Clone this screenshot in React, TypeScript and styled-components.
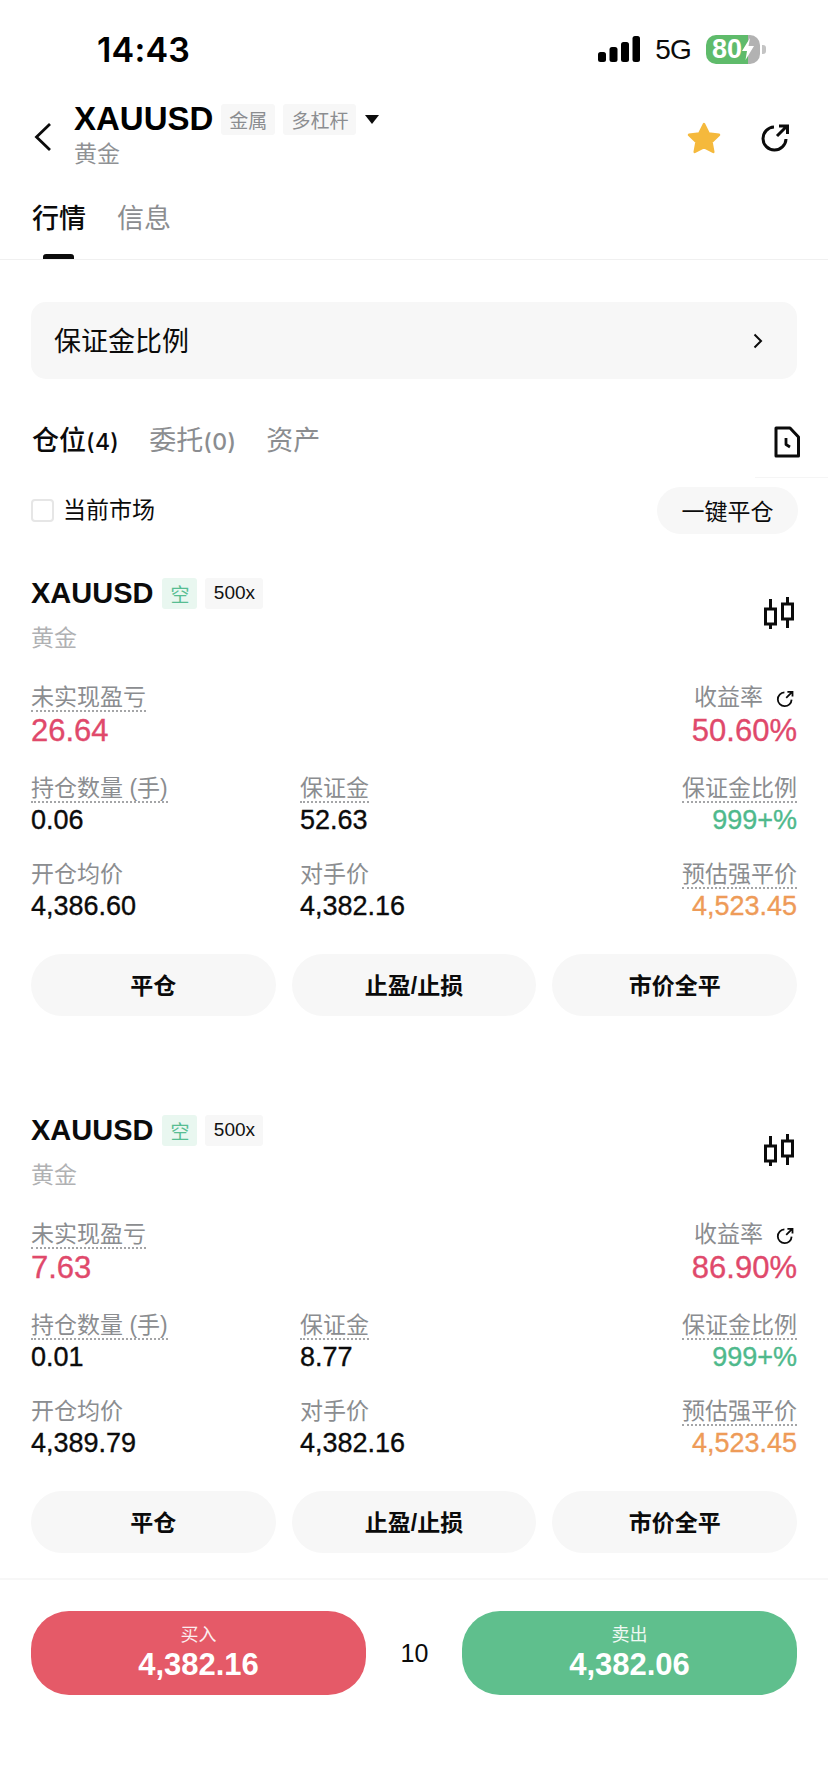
import React from "react";
import styled, { createGlobalStyle } from "styled-components";

const GlobalStyle = createGlobalStyle`
  html, body { margin: 0; padding: 0; background: #fff; }
  body { font-family: "Liberation Sans", "Noto Sans CJK SC", sans-serif; color: #0b0b0b; }
  * { box-sizing: border-box; }
`;

const Page = styled.div`
  width: 828px;
  height: 1792px;
  overflow: hidden;
  display: flex;
  flex-direction: column;
  background: #fff;
`;

/* Status bar */
const StatusBar = styled.div`
  height: 99px;
  padding: 29px 68px 0 97px;
  display: flex;
  justify-content: space-between;
  align-items: flex-start;
`;
const Clock = styled.div`
  font-family: "Inter", "Liberation Sans", sans-serif;
  font-size: 34px;
  font-weight: 600;
  line-height: 41px;
  letter-spacing: 0.2px;
  color: #000;
`;
const StatusRight = styled.div`
  display: flex;
  align-items: center;
  height: 40px;
`;
const Network = styled.span`
  font-size: 28px;
  line-height: 40px;
  letter-spacing: -0.8px;
  margin: 2px 15px 0 15px;
`;
const Battery = styled.div`
  width: 54px;
  height: 29px;
  border-radius: 10px;
  background: linear-gradient(90deg, #5fbb6b 0 78%, #b2b2b2 78% 100%);
  color: #fff;
  font-size: 27px;
  font-weight: 700;
  line-height: 29px;
  padding-left: 6px;
  display: flex;
  align-items: center;
  position: relative;
  &::after {
    content: "";
    position: absolute;
    right: -6px;
    top: 10px;
    width: 4px;
    height: 9px;
    border-radius: 0 3px 3px 0;
    background: #c4c4c4;
  }
`;

/* Instrument header */
const Header = styled.div`
  height: 70px;
  padding: 0 38px 0 34px;
  display: flex;
  align-items: center;
`;
const BackButton = styled.div`
  width: 40px;
  height: 70px;
  padding-top: 23px;
  display: flex;
`;
const TitleBlock = styled.div`
  flex: 1;
  padding-top: 1px;
  display: flex;
  flex-direction: column;
`;
const TitleRow = styled.div`
  display: flex;
  align-items: center;
  height: 38px;
`;
const Symbol = styled.span`
  font-size: 33px;
  font-weight: 700;
  line-height: 38px;
  color: #000;
`;
const GreyTag = styled.span`
  height: 31px;
  padding: 0 8px;
  margin-left: 8px;
  display: inline-flex;
  align-items: center;
  background: #f7f7f7;
  border-radius: 3px;
  color: #8b8d90;
  font-size: 19px;
`;
const Caret = styled.span`
  width: 0;
  height: 0;
  margin-left: 9px;
  border-left: 7px solid transparent;
  border-right: 7px solid transparent;
  border-top: 9px solid #0b0b0b;
`;
const Subtitle = styled.div`
  font-size: 23px;
  line-height: 30px;
  color: #8f9194;
  margin-top: 1px;
`;
const HeaderActions = styled.div`
  display: flex;
  align-items: center;
  gap: 39px;
  padding-top: 7px;
`;

/* Main tabs */
const TabRow = styled.div`
  padding: 32px 0 0 32px;
  height: 91px;
  display: flex;
  gap: 31px;
  border-bottom: 1px solid #f0f0f0;
`;
const Tab = styled.div<{ $active?: boolean }>`
  display: flex;
  flex-direction: column;
  font-size: 27px;
  line-height: 36px;
  color: ${(p) => (p.$active ? "#0b0b0b" : "#8b8d90")};
  font-weight: ${(p) => (p.$active ? 500 : 400)};
`;
const TabMark = styled.div`
  width: 31px;
  height: 5px;
  margin: 17px 0 0 11px;
  border-radius: 3px 3px 0 0;
  background: #0b0b0b;
`;

/* Margin ratio entry */
const MarginCard = styled.div`
  margin: 42px 31px 0;
  height: 77px;
  padding: 0 34px 2px 23px;
  display: flex;
  align-items: center;
  justify-content: space-between;
  background: #f7f7f7;
  border-radius: 15px;
  font-size: 27px;
  flex-shrink: 0;
`;
const ChevronSlot = styled.span`
  display: flex;
  padding-top: 2px;
`;

/* Order tabs and filter */
const SubTabRow = styled.div`
  margin-top: 45px;
  padding: 0 28px 0 32px;
  height: 36px;
  display: flex;
  align-items: center;
  gap: 30px;
  flex-shrink: 0;
`;
const SubTab = styled.div<{ $active?: boolean }>`
  font-size: 27px;
  line-height: 36px;
  padding-bottom: 3px;
  display: flex;
  align-items: center;
  color: ${(p) => (p.$active ? "#0b0b0b" : "#8b8d90")};
  font-weight: ${(p) => (p.$active ? 500 : 400)};
`;
const Count = styled.span`
  font-family: "Inter", "Liberation Sans", sans-serif;
  font-size: 23px;
  font-weight: 500;
  letter-spacing: 0.4px;
  padding-top: 2px;
`;
const DocSlot = styled.div`
  margin-left: auto;
  display: flex;
`;
const SubRule = styled.div`
  align-self: flex-end;
  width: 73px;
  height: 1px;
  margin-top: 17px;
  background: #f5f5f5;
  flex-shrink: 0;
`;
const FilterRow = styled.div`
  margin-top: 9px;
  padding: 0 30px 0 31px;
  height: 47px;
  display: flex;
  align-items: center;
  justify-content: space-between;
  flex-shrink: 0;
`;
const CheckLabel = styled.div`
  display: flex;
  align-items: center;
  gap: 9px;
  font-size: 23px;
  line-height: 26px;
`;
const CheckBox = styled.span`
  width: 23px;
  height: 23px;
  border: 2px solid #e6e6e6;
  border-radius: 4px;
`;
const CheckText = styled.span`
  padding-bottom: 1px;
`;
const CloseAll = styled.div`
  width: 141px;
  height: 47px;
  padding-bottom: 1px;
  border-radius: 24px;
  background: #f7f7f7;
  display: flex;
  align-items: center;
  justify-content: center;
  font-size: 23px;
`;

/* Position card */
const Card = styled.div<{ $first?: boolean }>`
  margin-top: ${(p) => (p.$first ? 38 : 93)}px;
  padding: 0 31px;
  flex-shrink: 0;
`;
const CardHead = styled.div`
  display: flex;
  align-items: flex-start;
  justify-content: space-between;
  height: 42px;
`;
const CardTitle = styled.div`
  display: flex;
  align-items: center;
  height: 42px;
`;
const CardSymbol = styled.span`
  font-size: 29px;
  font-weight: 700;
  margin-right: 1px;
`;
const SideTag = styled.span`
  width: 35px;
  height: 31px;
  margin-left: 8px;
  display: inline-flex;
  align-items: center;
  justify-content: center;
  background: #e9f7f0;
  color: #57bd92;
  border-radius: 3px;
  font-size: 19px;
`;
const LeverTag = styled.span`
  width: 58px;
  height: 31px;
  margin-left: 8px;
  display: inline-flex;
  align-items: center;
  justify-content: center;
  background: #f7f7f7;
  border-radius: 3px;
  font-size: 19px;
  color: #111;
`;
const ChartSlot = styled.div`
  margin: 25px 3px 0 0;
  display: flex;
`;
const CardSub = styled.div`
  margin-top: 9px;
  font-size: 23px;
  line-height: 30px;
  color: #b0b1b3;
`;
const Metrics = styled.div`
  margin-top: 31px;
  display: grid;
  grid-template-columns: 269px 1fr auto;
  row-gap: 26px;
`;
const Metric = styled.div<{ $right?: boolean }>`
  display: flex;
  flex-direction: column;
  align-items: ${(p) => (p.$right ? "flex-end" : "flex-start")};
`;
const Label = styled.div<{ $dotted?: boolean; $withIcon?: boolean }>`
  height: 28px;
  display: flex;
  align-items: center;
  gap: 13px;
  font-size: 23px;
  line-height: 26px;
  color: #8b8d90;
  padding-right: ${(p) => (p.$withIcon ? 3 : 0)}px;
  border-bottom: 2px dotted ${(p) => (p.$dotted ? "#a4a5a7" : "transparent")};
`;
const LabelIcon = styled.span`
  display: flex;
  padding-top: 3px;
`;
const Value = styled.div<{ $tone?: string; $big?: boolean }>`
  font-size: ${(p) => (p.$big ? 31 : 27)}px;
  line-height: ${(p) => (p.$big ? 36 : 30)}px;
  margin-top: ${(p) => (p.$big ? 1 : 2)}px;
  color: ${(p) => p.$tone ?? "#0b0b0b"};
  -webkit-text-stroke: 0.35px currentColor;
`;
const CardButtons = styled.div`
  margin-top: 33px;
  display: grid;
  grid-template-columns: repeat(3, 1fr);
  gap: 16px;
`;
const CardButton = styled.div`
  height: 62px;
  padding-bottom: 3px;
  border-radius: 31px;
  background: #f7f7f7;
  display: flex;
  align-items: center;
  justify-content: center;
  font-size: 23px;
  font-weight: 700;
`;

/* Buy and sell bar */
const TradeBar = styled.div`
  margin-top: 25px;
  padding: 31px 31px 0;
  border-top: 2px solid #f7f7f7;
  display: flex;
  align-items: center;
  justify-content: space-between;
  flex-shrink: 0;
`;
const TradeButton = styled.div<{ $tone: string }>`
  width: 335px;
  height: 84px;
  border-radius: 38px;
  background: ${(p) => p.$tone};
  color: #fff;
  display: flex;
  flex-direction: column;
  align-items: center;
  justify-content: center;
`;
const TradeLabel = styled.div`
  font-size: 18px;
  line-height: 24px;
  opacity: 0.9;
`;
const TradePrice = styled.div`
  font-size: 31px;
  font-weight: 700;
  line-height: 36px;
`;
const Spread = styled.div`
  font-size: 25px;
  width: 50px;
  text-align: center;
  margin-left: 1px;
`;

const SignalIcon = () => (
  <svg width="42" height="26" viewBox="0 0 42 26" fill="#000">
    <rect x="0" y="16" width="8" height="10" rx="2.5" />
    <rect x="11.5" y="11" width="8" height="15" rx="2.5" />
    <rect x="23" y="6" width="8" height="20" rx="2.5" />
    <rect x="34.5" y="0" width="7.5" height="26" rx="2.5" />
  </svg>
);

const BoltIcon = () => (
  <svg width="12" height="22" viewBox="0 0 12 22" fill="#fff">
    <path d="M8 0 L0 13 H5 L3.5 22 L12 8 H6.5 Z" />
  </svg>
);

const BackIcon = () => (
  <svg width="18" height="30" viewBox="0 0 18 30" fill="none" stroke="#0b0b0b" strokeWidth="2.8">
    <path d="M16 2 L2.5 15 L16 28" />
  </svg>
);

const StarIcon = () => (
  <svg width="34" height="32" viewBox="0 0 34 32" fill="#f5b93c" stroke="#f5b93c" strokeWidth="2.5" strokeLinejoin="round">
    <path d="M17 2 L21.6 11.4 L32 12.8 L24.5 20 L26.3 30 L17 25.2 L7.7 30 L9.5 20 L2 12.8 L12.4 11.4 Z" />
  </svg>
);

const ShareIcon = ({ size }: { size: number }) => (
  <svg width={size} height={size} viewBox="0 0 30 30" fill="none" stroke="#0b0b0b" strokeWidth="3">
    <path d="M14 4 A11.5 11.5 0 1 0 26 16" />
    <path d="M17 13 L27 3 M19 3 H27.5 V11" />
  </svg>
);

const ChevronIcon = () => (
  <svg width="10" height="16" viewBox="0 0 10 16" fill="none" stroke="#0b0b0b" strokeWidth="2">
    <path d="M1.5 1.5 L8 8 L1.5 14.5" />
  </svg>
);

const HistoryIcon = () => (
  <svg width="26" height="32" viewBox="0 0 26 32" fill="none" stroke="#0b0b0b" strokeWidth="3" strokeLinejoin="round">
    <path d="M2 2 H16 L24.5 11 V30 H2 Z" />
    <path d="M12 12 V18.5 L16 21" strokeWidth="2.8" />
  </svg>
);

const CandleIcon = () => (
  <svg width="30" height="32" viewBox="0 0 30 32" fill="none" stroke="#0b0b0b" strokeWidth="3">
    <rect x="1.5" y="12" width="10" height="15" />
    <path d="M6.5 2 V12 M6.5 27 V32" />
    <rect x="18.5" y="7" width="10" height="15" />
    <path d="M23.5 0 V7 M23.5 22 V31" />
  </svg>
);

type Position = {
  pnl: string;
  roe: string;
  size: string;
  margin: string;
  entry: string;
};

const RED = "#e0496b";
const GREEN = "#4fb98c";
const ORANGE = "#ee9b58";

const PositionCard = ({ data, first }: { data: Position; first?: boolean }) => (
  <Card $first={first}>
    <CardHead>
      <CardTitle>
        <CardSymbol>XAUUSD</CardSymbol>
        <SideTag>空</SideTag>
        <LeverTag>500x</LeverTag>
      </CardTitle>
      <ChartSlot>
        <CandleIcon />
      </ChartSlot>
    </CardHead>
    <CardSub>黄金</CardSub>
    <Metrics>
      <Metric>
        <Label $dotted>未实现盈亏</Label>
        <Value $big $tone={RED}>{data.pnl}</Value>
      </Metric>
      <Metric />
      <Metric $right>
        <Label $withIcon>
          收益率
          <LabelIcon>
            <ShareIcon size={18} />
          </LabelIcon>
        </Label>
        <Value $big $tone={RED}>{data.roe}</Value>
      </Metric>
      <Metric>
        <Label $dotted>持仓数量 (手)</Label>
        <Value>{data.size}</Value>
      </Metric>
      <Metric>
        <Label $dotted>保证金</Label>
        <Value>{data.margin}</Value>
      </Metric>
      <Metric $right>
        <Label $dotted>保证金比例</Label>
        <Value $tone={GREEN}>999+%</Value>
      </Metric>
      <Metric>
        <Label>开仓均价</Label>
        <Value>{data.entry}</Value>
      </Metric>
      <Metric>
        <Label>对手价</Label>
        <Value>4,382.16</Value>
      </Metric>
      <Metric $right>
        <Label $dotted>预估强平价</Label>
        <Value $tone={ORANGE}>4,523.45</Value>
      </Metric>
    </Metrics>
    <CardButtons>
      <CardButton>平仓</CardButton>
      <CardButton>止盈/止损</CardButton>
      <CardButton>市价全平</CardButton>
    </CardButtons>
  </Card>
);

const positions: Position[] = [
  { pnl: "26.64", roe: "50.60%", size: "0.06", margin: "52.63", entry: "4,386.60" },
  { pnl: "7.63", roe: "86.90%", size: "0.01", margin: "8.77", entry: "4,389.79" },
];

export default function App() {
  return (
    <Page>
      <GlobalStyle />
      <StatusBar>
        <Clock>14:43</Clock>
        <StatusRight>
          <SignalIcon />
          <Network>5G</Network>
          <Battery>
            80
            <BoltIcon />
          </Battery>
        </StatusRight>
      </StatusBar>

      <Header>
        <BackButton>
          <BackIcon />
        </BackButton>
        <TitleBlock>
          <TitleRow>
            <Symbol>XAUUSD</Symbol>
            <GreyTag>金属</GreyTag>
            <GreyTag>多杠杆</GreyTag>
            <Caret />
          </TitleRow>
          <Subtitle>黄金</Subtitle>
        </TitleBlock>
        <HeaderActions>
          <StarIcon />
          <ShareIcon size={30} />
        </HeaderActions>
      </Header>

      <TabRow>
        <Tab $active>
          行情
          <TabMark />
        </Tab>
        <Tab>信息</Tab>
      </TabRow>

      <MarginCard>
        保证金比例
        <ChevronSlot>
          <ChevronIcon />
        </ChevronSlot>
      </MarginCard>

      <SubTabRow>
        <SubTab $active>
          仓位<Count>(4)</Count>
        </SubTab>
        <SubTab>
          委托<Count>(0)</Count>
        </SubTab>
        <SubTab>资产</SubTab>
        <DocSlot>
          <HistoryIcon />
        </DocSlot>
      </SubTabRow>
      <SubRule />

      <FilterRow>
        <CheckLabel>
          <CheckBox />
          <CheckText>当前市场</CheckText>
        </CheckLabel>
        <CloseAll>一键平仓</CloseAll>
      </FilterRow>

      {positions.map((p, i) => (
        <PositionCard key={p.entry} data={p} first={i === 0} />
      ))}

      <TradeBar>
        <TradeButton $tone="#e55a68">
          <TradeLabel>买入</TradeLabel>
          <TradePrice>4,382.16</TradePrice>
        </TradeButton>
        <Spread>10</Spread>
        <TradeButton $tone="#5fbf8d">
          <TradeLabel>卖出</TradeLabel>
          <TradePrice>4,382.06</TradePrice>
        </TradeButton>
      </TradeBar>
    </Page>
  );
}
